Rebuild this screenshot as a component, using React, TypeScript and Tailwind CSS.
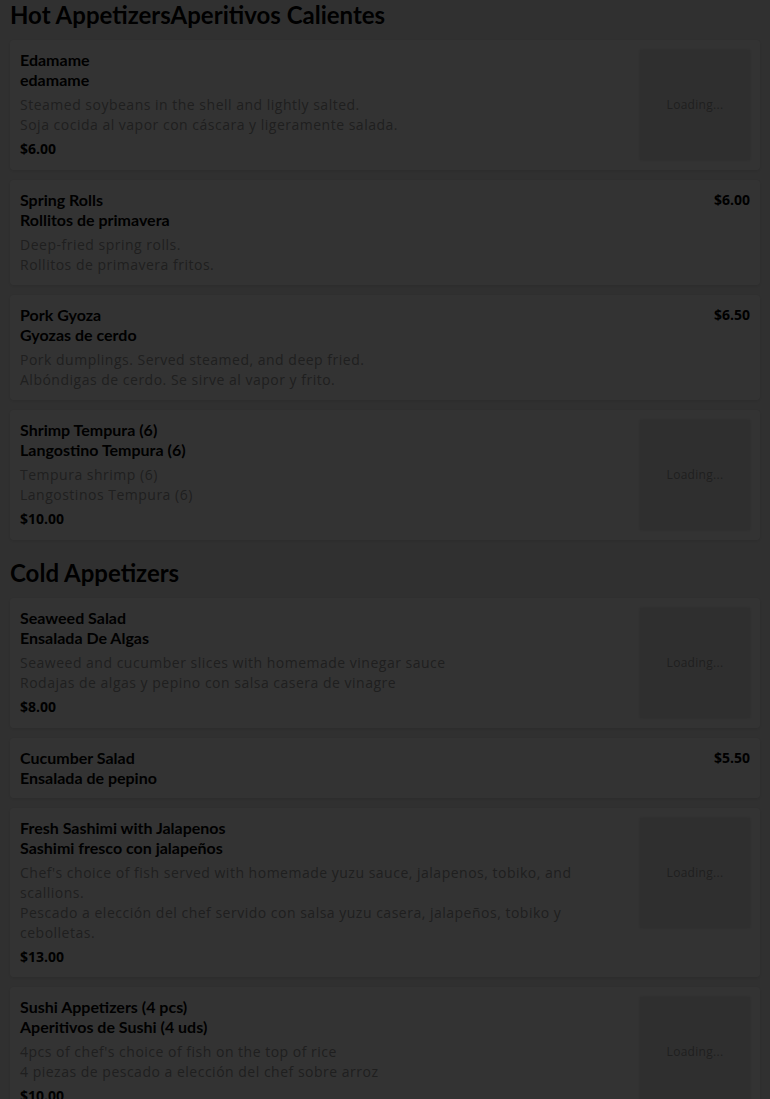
import React from 'react';

type Item = {
  name: string;
  nameEs: string;
  desc?: string;
  descEs?: string;
  price: string;
  image?: boolean;
};

const sections: { title: string; items: Item[] }[] = [
  {
    title: 'Hot AppetizersAperitivos Calientes',
    items: [
      {
        name: 'Edamame',
        nameEs: 'edamame',
        desc: 'Steamed soybeans in the shell and lightly salted.',
        descEs: 'Soja cocida al vapor con cáscara y ligeramente salada.',
        price: '$6.00',
        image: true,
      },
      {
        name: 'Spring Rolls',
        nameEs: 'Rollitos de primavera',
        desc: 'Deep-fried spring rolls.',
        descEs: 'Rollitos de primavera fritos.',
        price: '$6.00',
      },
      {
        name: 'Pork Gyoza',
        nameEs: 'Gyozas de cerdo',
        desc: 'Pork dumplings. Served steamed, and deep fried.',
        descEs: 'Albóndigas de cerdo. Se sirve al vapor y frito.',
        price: '$6.50',
      },
      {
        name: 'Shrimp Tempura (6)',
        nameEs: 'Langostino Tempura (6)',
        desc: 'Tempura shrimp (6)',
        descEs: 'Langostinos Tempura (6)',
        price: '$10.00',
        image: true,
      },
    ],
  },
  {
    title: 'Cold Appetizers',
    items: [
      {
        name: 'Seaweed Salad',
        nameEs: 'Ensalada De Algas',
        desc: 'Seaweed and cucumber slices with homemade vinegar sauce',
        descEs: 'Rodajas de algas y pepino con salsa casera de vinagre',
        price: '$8.00',
        image: true,
      },
      {
        name: 'Cucumber Salad',
        nameEs: 'Ensalada de pepino',
        price: '$5.50',
      },
      {
        name: 'Fresh Sashimi with Jalapenos',
        nameEs: 'Sashimi fresco con jalapeños',
        desc: "Chef's choice of fish served with homemade yuzu sauce, jalapenos, tobiko, and scallions.",
        descEs: 'Pescado a elección del chef servido con salsa yuzu casera, jalapeños, tobiko y cebolletas.',
        price: '$13.00',
        image: true,
      },
      {
        name: 'Sushi Appetizers (4 pcs)',
        nameEs: 'Aperitivos de Sushi (4 uds)',
        desc: "4pcs of chef's choice of fish on the top of rice",
        descEs: '4 piezas de pescado a elección del chef sobre arroz',
        price: '$10.00',
        image: true,
      },
    ],
  },
];

const MenuCard = ({ item }: { item: Item }) => (
  <div className="bg-white rounded-[4px] shadow-[0_1px_4px_rgba(0,0,0,0.12)] p-[10px] flex items-start gap-5">
    <div className="flex-1 min-w-0">
      <div className="font-['Lato',sans-serif] font-bold text-[16px] leading-[20px] text-black">
        <div>{item.name}</div>
        <div>{item.nameEs}</div>
      </div>
      {item.desc && (
        <div className="mt-[5px] font-['Open_Sans',sans-serif] text-[14px] tracking-[0.5px] leading-[20px] text-[#9a9a9a]">
          <div>{item.desc}</div>
          <div>{item.descEs}</div>
        </div>
      )}
      {item.image && (
        <div className="mt-[4px] font-['Open_Sans',sans-serif] font-bold text-[14px] leading-[20px] text-black">
          {item.price}
        </div>
      )}
    </div>
    {item.image ? (
      <div className="w-[110px] h-[110px] shrink-0 bg-[#ececec] shadow-[0_0_3px_rgba(0,0,0,0.15)] flex items-center justify-center">
        <span className="font-['Open_Sans',sans-serif] text-[12px] tracking-[0.3px] text-[#999]">Loading...</span>
      </div>
    ) : (
      <div className="font-['Open_Sans',sans-serif] font-bold text-[14px] leading-[20px] text-black">
        {item.price}
      </div>
    )}
  </div>
);

export default function App() {
  return (
    <div className="relative min-h-screen bg-[#f1f1f1] px-[10px] overflow-hidden">
      {sections.map((section, i) => (
        <div key={section.title} className={i > 0 ? 'mt-[18px]' : ''}>
          <h2 className="font-['Lato',sans-serif] font-bold text-[24px] leading-[30px] text-black mb-[10px]">
            {section.title}
          </h2>
          <div className="flex flex-col gap-[10px]">
            {section.items.map((item) => (
              <MenuCard key={item.name} item={item} />
            ))}
          </div>
        </div>
      ))}

      {/* modal backdrop */}
      <div className="fixed inset-0 bg-black/80" />
    </div>
  );
}
